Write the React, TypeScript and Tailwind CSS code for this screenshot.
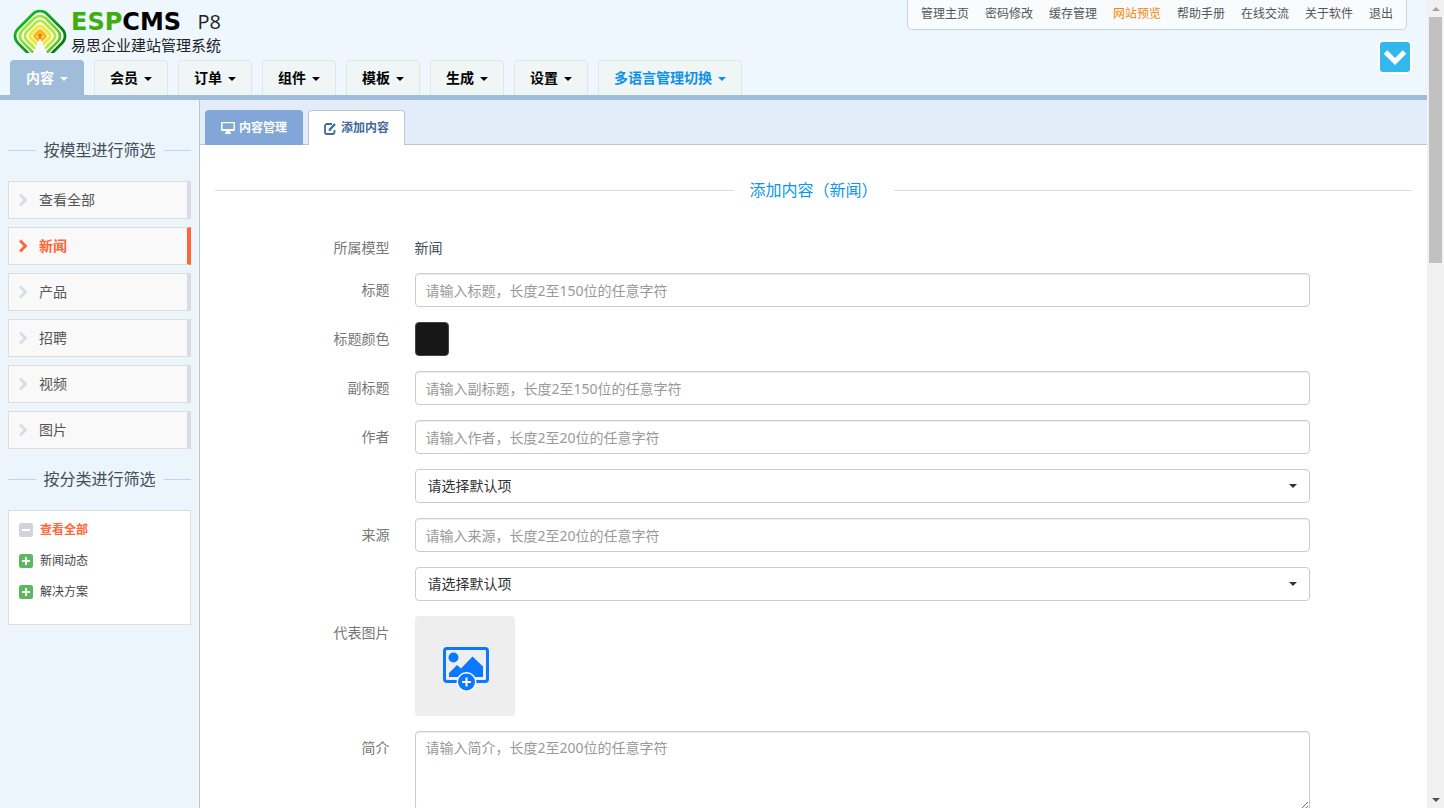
import { useState } from "react";
import type { ReactNode } from "react";

const topLinks = ["管理主页", "密码修改", "缓存管理", "网站预览", "帮助手册", "在线交流", "关于软件", "退出"];
const menus = ["内容", "会员", "订单", "组件", "模板", "生成", "设置"];
const models = ["查看全部", "新闻", "产品", "招聘", "视频", "图片"];
const categories = ["查看全部", "新闻动态", "解决方案"];

const inputClass =
    "block w-full rounded border border-[#ccc] bg-white px-[10px] text-sm text-[#555] placeholder-[#999] shadow-[inset_0_1px_1px_rgba(0,0,0,0.075)] outline-none focus:border-[#66afe9]";

function Caret({ className = "" }: { className?: string }) {
    return (
        <svg className={className} width="8" height="4" viewBox="0 0 8 4" fill="currentColor">
            <path d="M0 0h8L4 4z" />
        </svg>
    );
}

function LogoMark() {
    const rings = [
        { r: 20.6, color: "url(#ringOuter)", rx: 10 },
        { r: 16.5, color: "url(#ringMid)", rx: 8 },
        { r: 12.4, color: "#b4ea3a", rx: 6 },
        { r: 8.3, color: "#ece93a", rx: 4 },
        { r: 4.2, color: "#fbb41c", rx: 2 },
    ];
    return (
        <svg width="54" height="44" viewBox="0 0 54 44">
            <defs>
                <linearGradient id="ringOuter" x1="0" y1="0" x2="1" y2="0">
                    <stop offset="0" stopColor="#12b41c" />
                    <stop offset="1" stopColor="#067a12" />
                </linearGradient>
                <linearGradient id="ringMid" x1="0" y1="0" x2="1" y2="0">
                    <stop offset="0" stopColor="#9be445" />
                    <stop offset="1" stopColor="#5fc02e" />
                </linearGradient>
            </defs>
            {rings.map(({ r, color, rx }) => (
                <rect
                    key={r}
                    x={27 - r}
                    y={27 - r}
                    width={r * 2}
                    height={r * 2}
                    rx={rx}
                    fill={r < 9 ? "#fff3a8" : "#fbfff0"}
                    stroke={color}
                    strokeWidth="2.7"
                    transform="rotate(45 27 27)"
                />
            ))}
            <path d="M27 23.5l3 3-1.6 1.6V32h-2.8V28.1L24 26.5z" fill="#f08a00" />
            <path d="M26.300 30h1.400L34 44H20z" fill="#f4faff" />
        </svg>
    );
}

function SideTitle({ children }: { children: ReactNode }) {
    return (
        <h2 className="flex items-center gap-2 text-base leading-5 text-[#444f58]">
            <span className="h-px flex-1 bg-[#b9d5f2]" />
            {children}
            <span className="h-px flex-1 bg-[#b9d5f2]" />
        </h2>
    );
}

function FormRow({ label, htmlFor, children }: { label?: string; htmlFor?: string; children: ReactNode }) {
    return (
        <div className="flex">
            <div className="w-1/6 pr-[15px] text-right text-sm leading-[34px] text-[#777]">
                {label && <label htmlFor={htmlFor}>{label}</label>}
            </div>
            <div className="w-3/4 pl-[10px] pr-[15px]">{children}</div>
        </div>
    );
}

function DefaultSelect({ label }: { label: string }) {
    return (
        <div className="relative">
            <select
                aria-label={label}
                className="block h-[34px] w-full appearance-none rounded border border-[#ccc] bg-white px-3 text-sm text-[#333] outline-none"
            >
                <option>请选择默认项</option>
            </select>
            <Caret className="pointer-events-none absolute right-[13px] top-[15px] text-[#333]" />
        </div>
    );
}

function UploadIcon() {
    return (
        <svg width="48" height="50" viewBox="-2 -6 48 50">
            <rect x="1.5" y="1.5" width="43" height="33" rx="2.5" fill="none" stroke="#0a78ff" strokeWidth="3" />
            <circle cx="10.5" cy="10.5" r="5" fill="#0a78ff" />
            <path d="M6 30v-4l8-8 4 3.500L29.500 9.500 40 19.500V30z" fill="#0a78ff" />
            <circle cx="23.500" cy="35" r="10" fill="#fff" />
            <circle cx="23.500" cy="35" r="8.500" fill="#0a78ff" />
            <path d="M23.500 30.500v9M19 35h9" stroke="#fff" strokeWidth="2" />
        </svg>
    );
}

function Header() {
    return (
        <header className="flex h-[100px] shrink-0 justify-between border-b-[5px] border-[#9fbcdb] bg-[#eef6fe]">
            <div className="flex flex-col justify-between pl-[10px]">
                <div className="flex items-center gap-1 pl-[3px] pt-2">
                    <LogoMark />
                    <div className="flex flex-col gap-px">
                        <div className="flex items-center justify-between">
                            <span className="font-['DejaVu_Sans'] text-2xl font-bold leading-7 text-black">
                                <span className="text-[#3fae0c]">ESP</span>CMS
                            </span>
                            <span className="font-['Open_Sans'] text-xl leading-7 text-[#222]">P8</span>
                        </div>
                        <span className="text-[15px] leading-4 text-[#222]">易思企业建站管理系统</span>
                    </div>
                </div>
                <nav className="flex gap-[10px] text-sm font-bold">
                    {menus.map((m, i) => (
                        <button
                            key={m}
                            className={`flex h-[35px] cursor-pointer items-center gap-[6px] rounded-t border border-b-0 px-[15px] ${
                                i === 0
                                    ? "border-[#9fbcdb] bg-[#9fbcdb] text-white"
                                    : "border-[#e2e6e6] bg-[#f0f5f6] text-black"
                            }`}
                        >
                            {m}
                            <Caret className="mt-px" />
                        </button>
                    ))}
                    <button className="flex h-[35px] cursor-pointer items-center gap-[6px] rounded-t border border-b-0 border-[#e2e6e6] bg-[#f0f5f6] px-[15px] text-[#0b91ee]">
                        多语言管理切换
                        <Caret className="mt-px" />
                    </button>
                </nav>
            </div>
            <div className="flex flex-col items-end gap-[10px] pr-[15px]">
                <nav className="mr-[5px] flex h-[30px] gap-4 rounded-b-[5px] border border-t-0 border-[#c5d6e8] bg-[#f9fcff] px-[13px] text-xs leading-[27px] text-[#555]">
                    {topLinks.map((l) => (
                        <a key={l} href="#" className={l === "网站预览" ? "text-[#ff8400]" : "hover:underline"}>
                            {l}
                        </a>
                    ))}
                </nav>
                <button
                    aria-label="展开"
                    className="flex h-[34px] w-[34px] cursor-pointer items-center justify-center rounded-[5px] border-2 border-white bg-[#32b8ec] text-white"
                >
                    <svg width="24" height="16" viewBox="0 0 24 16" fill="none" stroke="currentColor" strokeWidth="5">
                        <path d="M2.500 3L12 12.500 21.500 3" />
                    </svg>
                </button>
            </div>
        </header>
    );
}

function Sidebar() {
    const [model, setModel] = useState("新闻");

    return (
        <aside className="w-[200px] shrink-0 border-r border-[#bfc5cb] bg-[#ecf4fc] px-2 pt-10">
            <SideTitle>按模型进行筛选</SideTitle>
            <ul className="mb-5 mt-[21px] flex flex-col gap-2">
                {models.map((m) => (
                    <li key={m}>
                        <button
                            onClick={() => setModel(m)}
                            className={`flex h-[38px] w-full cursor-pointer items-center gap-3 border border-r-4 border-[#ddd] bg-[#f9f9f9] pl-[10px] text-sm ${
                                model === m ? "border-r-[#ff6537] font-bold text-[#ff6537]" : "border-r-[#d8dce8] text-[#555]"
                            }`}
                        >
                            <svg
                                className={model === m ? "text-[#ff6537]" : "text-[#d8dce8]"}
                                width="8"
                                height="14"
                                viewBox="0 0 8 14"
                                fill="none"
                                stroke="currentColor"
                                strokeWidth="3"
                            >
                                <path d="M1 1.500L6.500 7 1 12.500" />
                            </svg>
                            {m}
                        </button>
                    </li>
                ))}
            </ul>
            <SideTitle>按分类进行筛选</SideTitle>
            <ul className="mt-[21px] border border-[#ddd] bg-white pb-[17px] pl-[10px] pt-[3px]">
                {categories.map((c, i) => (
                    <li key={c}>
                        <a
                            href="#"
                            className={`flex h-[31px] items-center gap-[7px] text-xs ${
                                i === 0 ? "font-bold text-[#ff6537]" : "text-[#444]"
                            }`}
                        >
                            <svg width="14" height="14" viewBox="0 0 14 14">
                                <rect width="14" height="14" rx="2.500" fill={i === 0 ? "#d0d4da" : "#5cb85c"} />
                                <path d={i === 0 ? "M3 7h8" : "M3 7h8M7 3v8"} stroke="#fff" strokeWidth="2" />
                            </svg>
                            {c}
                        </a>
                    </li>
                ))}
            </ul>
        </aside>
    );
}

function Tabs() {
    return (
        <div className="flex h-[45px] items-end gap-[5px] border-b border-[#c0c5cc] bg-[#e3edfa] pl-[5px] text-xs font-bold">
            <button className="-mb-px flex h-[35px] cursor-pointer items-center gap-1 rounded-t bg-[#82a6d8] px-4 text-white">
                <svg width="14" height="12" viewBox="0 0 14 12" fill="currentColor">
                    <path fillRule="evenodd" d="M1 0h12a1 1 0 0 1 1 1v7a1 1 0 0 1-1 1H9v1.500h1V12H4v-1.500h1V9H1a1 1 0 0 1-1-1V1a1 1 0 0 1 1-1zm.5 1.300v5.700h11V1.300z" />
                </svg>
                内容管理
            </button>
            <button className="-mb-px flex h-[35px] cursor-pointer items-center gap-1 rounded-t border border-b-0 border-[#c0c5cc] bg-white px-[15px] text-[#41699b]">
                <svg width="13" height="13" viewBox="0 0 13 13" fill="none" stroke="currentColor">
                    <path d="M8 2H3a2 2 0 0 0-2 2v6a2 2 0 0 0 2 2h5.500a2 2 0 0 0 2-2V8" strokeWidth="1.800" />
                    <path d="M5.500 8l5.500-6" strokeWidth="2.400" />
                    <path d="M4.500 9l.5-2.500 2 2z" fill="currentColor" stroke="none" />
                </svg>
                添加内容
            </button>
        </div>
    );
}

function Scrollbar() {
    return (
        <div className="flex w-[17px] shrink-0 flex-col items-center justify-between bg-[#f1f1f1]">
            <div className="flex w-full flex-col items-center">
                <div className="flex h-[17px] shrink-0 items-center text-[#a3a3a3]">
                    <Caret className="rotate-180" />
                </div>
                <div className="h-[246px] w-[13px] bg-[#c1c1c1]" />
            </div>
            <div className="flex h-[17px] items-center text-[#505050]">
                <Caret />
            </div>
        </div>
    );
}

export default function App() {
    return (
        <div lang="zh-CN" className="flex h-screen overflow-hidden bg-white font-['Noto_Sans','Noto_Sans_CJK_SC',sans-serif]">
            <div className="flex min-w-0 flex-1 flex-col">
                <Header />
                <div className="flex min-h-0 flex-1">
                    <Sidebar />
                    <main className="min-w-0 flex-1 overflow-hidden bg-white">
                        <Tabs />
                        <h1 className="mx-[15px] mt-[35px] flex items-center gap-4 text-base leading-5 text-[#0b97ee]">
                            <span className="h-px flex-1 bg-[#ddd]" />
                            添加内容（新闻）
                            <span className="h-px flex-1 bg-[#ddd]" />
                        </h1>
                        <form className="mt-[38px] flex flex-col gap-[15px] pb-[15px]">
                            <div className="flex text-sm leading-5">
                                <div className="w-1/6 pr-[15px] text-right text-[#777]">所属模型</div>
                                <div className="w-3/4 pl-[10px] pr-[15px] text-[#444f58]">新闻</div>
                            </div>
                            <FormRow label="标题" htmlFor="title">
                                <input id="title" className={`${inputClass} h-[34px]`} placeholder="请输入标题，长度2至150位的任意字符" />
                            </FormRow>
                            <FormRow label="标题颜色" htmlFor="color">
                                <button id="color" type="button" className="block h-[34px] w-[34px] cursor-pointer rounded border border-[#444] bg-[#171717]" />
                            </FormRow>
                            <FormRow label="副标题" htmlFor="subtitle">
                                <input id="subtitle" className={`${inputClass} h-[34px]`} placeholder="请输入副标题，长度2至150位的任意字符" />
                            </FormRow>
                            <FormRow label="作者" htmlFor="author">
                                <input id="author" className={`${inputClass} h-[34px]`} placeholder="请输入作者，长度2至20位的任意字符" />
                            </FormRow>
                            <FormRow>
                                <DefaultSelect label="作者" />
                            </FormRow>
                            <FormRow label="来源" htmlFor="source">
                                <input id="source" className={`${inputClass} h-[34px]`} placeholder="请输入来源，长度2至20位的任意字符" />
                            </FormRow>
                            <FormRow>
                                <DefaultSelect label="来源" />
                            </FormRow>
                            <FormRow label="代表图片" htmlFor="picture">
                                <button id="picture" type="button" className="flex h-[100px] w-[100px] cursor-pointer items-center justify-center rounded bg-[#eee]">
                                    <UploadIcon />
                                </button>
                            </FormRow>
                            <FormRow label="简介" htmlFor="summary">
                                <textarea id="summary" className={`${inputClass} h-20 py-[6px]`} placeholder="请输入简介，长度2至200位的任意字符" />
                            </FormRow>
                        </form>
                    </main>
                </div>
            </div>
            <Scrollbar />
        </div>
    );
}
